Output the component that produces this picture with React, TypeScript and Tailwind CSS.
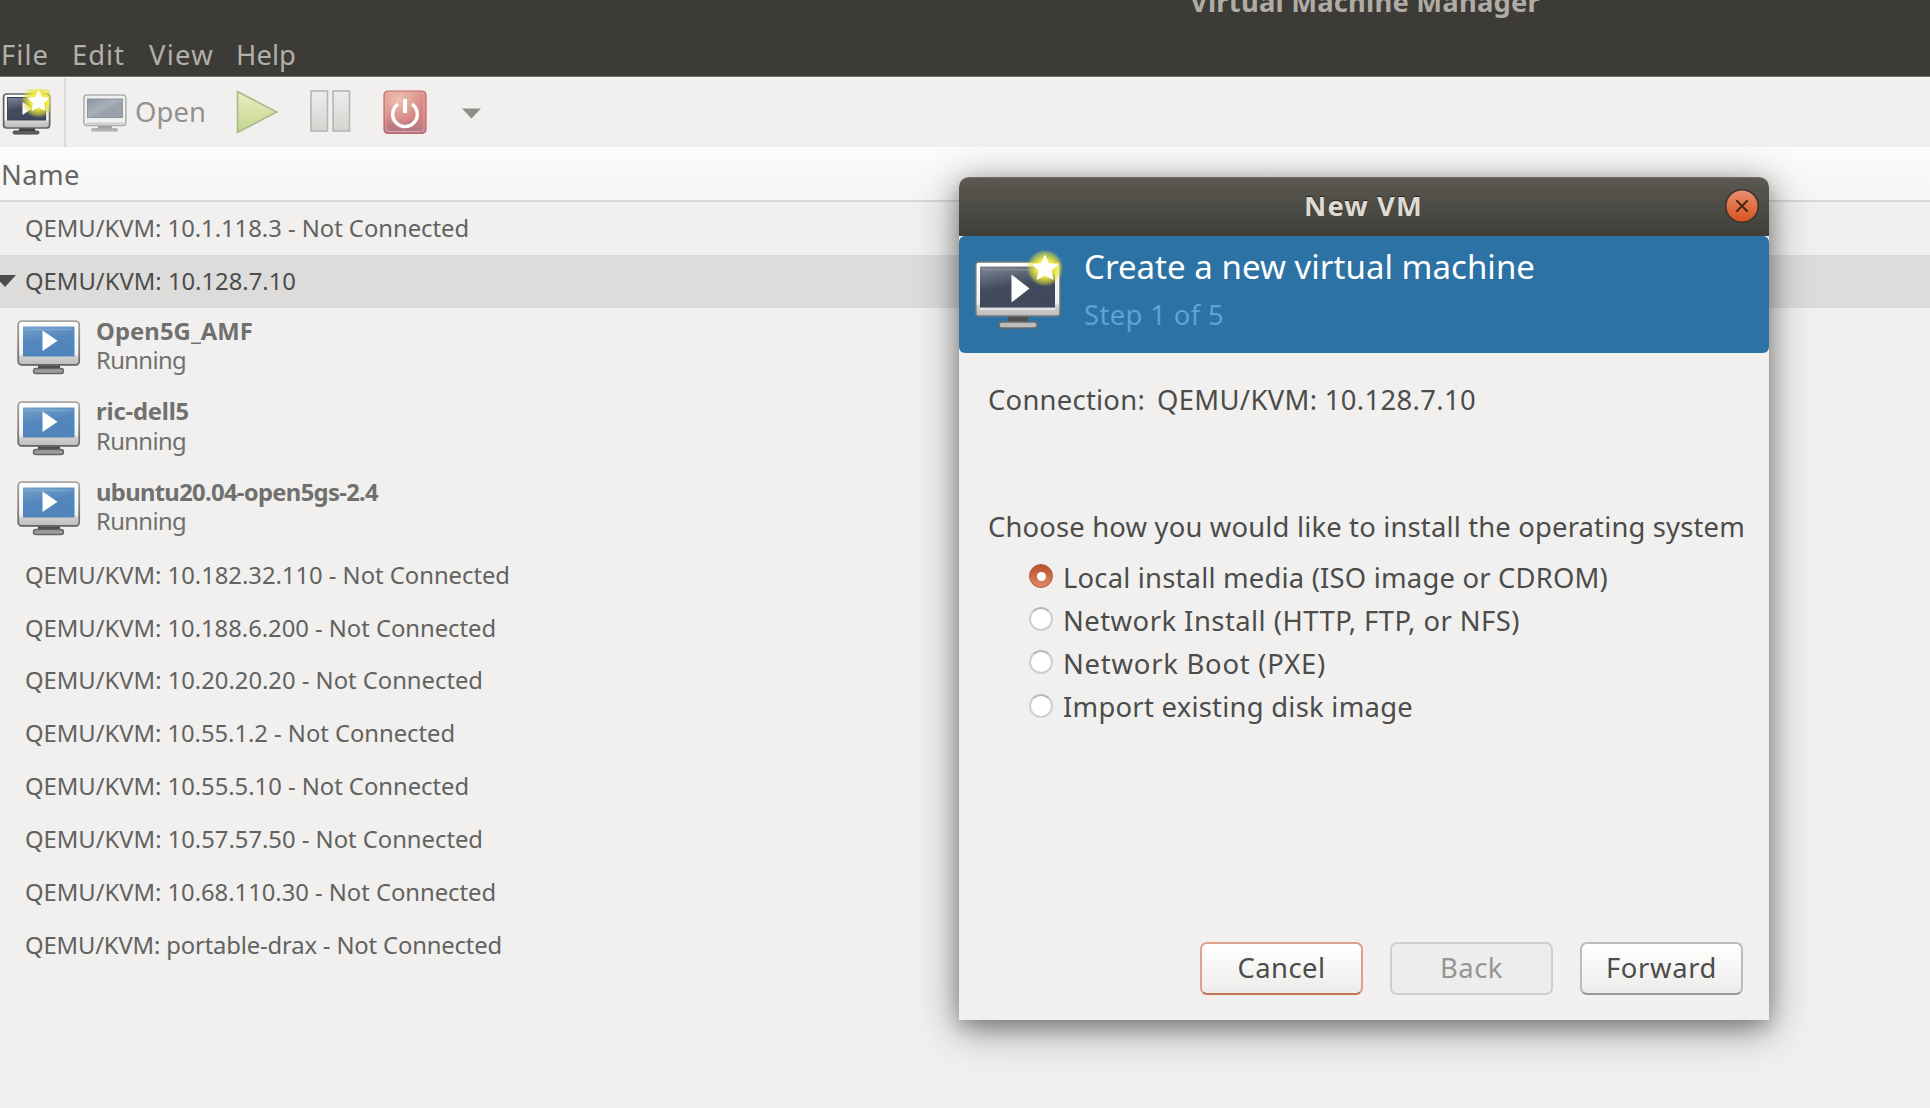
import { useLayoutEffect, useRef, useState } from "react";

/* Text set to a given advance width by adjusting its tracking. */
function Fit({ text, width, className = "" }: { text: string; width: number; className?: string }) {
  const ref = useRef<HTMLSpanElement>(null);
  const [tracking, setTracking] = useState(0);
  useLayoutEffect(() => {
    const el = ref.current;
    if (el) setTracking((width - el.getBoundingClientRect().width) / text.length);
  }, [text, width]);
  return (
    <span ref={ref} className={"inline-block shrink-0 whitespace-pre " + className} style={{ letterSpacing: tracking }}>
      {text}
    </span>
  );
}

function Gradients() {
  return (
    <svg width="0" height="0" className="absolute">
      <defs>
        <linearGradient id="frame" x1="0" y1="0" x2="0" y2="1">
          <stop offset="0" stopColor="#ffffff" />
          <stop offset="0.75" stopColor="#f2f2f2" />
          <stop offset="0.82" stopColor="#cfcfcf" />
          <stop offset="1" stopColor="#bdbdbd" />
        </linearGradient>
        <linearGradient id="edge" x1="0" y1="0" x2="0" y2="1">
          <stop offset="0" stopColor="#a4a4a2" />
          <stop offset="1" stopColor="#6a6a68" />
        </linearGradient>
        <linearGradient id="blue" x1="0" y1="0" x2="0.3" y2="1">
          <stop offset="0" stopColor="#79a3cd" />
          <stop offset="0.5" stopColor="#5488bd" />
          <stop offset="1" stopColor="#4f84ba" />
        </linearGradient>
        <linearGradient id="navy" x1="0" y1="0" x2="0.3" y2="1">
          <stop offset="0" stopColor="#7f8796" />
          <stop offset="0.55" stopColor="#434c5f" />
          <stop offset="1" stopColor="#40495c" />
        </linearGradient>
        <linearGradient id="grey" x1="0" y1="0" x2="1" y2="1">
          <stop offset="0" stopColor="#8d95a1" />
          <stop offset="0.45" stopColor="#a9afb8" />
          <stop offset="0.6" stopColor="#9aa1aa" />
          <stop offset="1" stopColor="#9ba1a9" />
        </linearGradient>
        <radialGradient id="glow">
          <stop offset="0" stopColor="#fdf84c" />
          <stop offset="0.5" stopColor="#f0ea3c" stopOpacity="0.95" />
          <stop offset="0.8" stopColor="#e2e13c" stopOpacity="0.55" />
          <stop offset="1" stopColor="#dfe03a" stopOpacity="0" />
        </radialGradient>
        <linearGradient id="play" x1="0" y1="0" x2="0" y2="1">
          <stop offset="0" stopColor="#eaf0bd" />
          <stop offset="1" stopColor="#c5d391" />
        </linearGradient>
        <linearGradient id="pause" x1="0" y1="0" x2="0" y2="1">
          <stop offset="0" stopColor="#eeeeed" />
          <stop offset="1" stopColor="#d2d5d0" />
        </linearGradient>
        <linearGradient id="power" x1="0" y1="0" x2="0" y2="1">
          <stop offset="0" stopColor="#dc918a" />
          <stop offset="0.65" stopColor="#d17f7e" />
          <stop offset="1" stopColor="#ae7789" />
        </linearGradient>
        <radialGradient id="powerShine" cx="0.35" cy="0.2" r="0.6">
          <stop offset="0" stopColor="#ecc0ae" />
          <stop offset="1" stopColor="#ecc0ae" stopOpacity="0" />
        </radialGradient>
      </defs>
    </svg>
  );
}

const STAR = "M0 -12.5 L3.8 -4.4 L12.4 -3.4 L6 2.6 L7.8 11.2 L0 7 L-7.8 11.2 L-6 2.6 L-12.4 -3.4 L-3.8 -4.4 Z";

function VmIcon() {
  return (
    <svg width="64" height="56" viewBox="0 0 64 56">
      <rect x="21" y="45" width="22" height="5" fill="#4c4c4b" />
      <rect x="16.5" y="48.5" width="30" height="5" rx="2.5" fill="#9d9d9c" stroke="#666665" strokeWidth="1.4" />
      <rect x="1.2" y="1.2" width="61" height="43.6" rx="3.5" fill="url(#frame)" stroke="url(#edge)" strokeWidth="1.8" />
      <path d="M3 44.6H60.5" stroke="#666" strokeWidth="1.4" />
      <rect x="6" y="6.5" width="51.5" height="30" fill="url(#blue)" />
      <path d="M9 9.6H54" stroke="#8fb3d8" strokeWidth="1" opacity="0.7" />
      <path d="M25.5 10.5V31L40.5 20.8Z" fill="#fff" />
    </svg>
  );
}

function NewVmLargeIcon() {
  return (
    <svg width="90" height="84" viewBox="0 0 90 84">
      <rect x="33" y="68" width="20" height="8" fill="#50504f" />
      <rect x="24" y="74" width="38" height="6" rx="2.4" fill="#bdbdbc" stroke="#696b6c" strokeWidth="1.6" />
      <rect x="0.9" y="14" width="84" height="54" rx="2.5" fill="url(#frame)" stroke="#77797b" strokeWidth="1.3" />
      <rect x="5" y="18.5" width="75" height="41" fill="url(#navy)" />
      <path d="M8 21.8H76" stroke="#a7adb8" strokeWidth="1" opacity="0.55" />
      <path d="M5 61H80" stroke="#fff" strokeWidth="1" />
      <path d="M36.5 26.5V54.5L54.5 40.5Z" fill="#fff" />
      <circle cx="70" cy="20" r="18.5" fill="url(#glow)" />
      <path d={STAR} transform="translate(70 20)" fill="#fff" stroke="#fff" strokeLinejoin="round" />
    </svg>
  );
}

function NewVmSmallIcon() {
  return (
    <svg width="50" height="48" viewBox="0 0 50 48">
      <rect x="17" y="39" width="16" height="5" fill="#3f3f3e" />
      <rect x="11" y="42" width="26" height="3" rx="1.4" fill="#626261" stroke="#454544" strokeWidth="1" />
      <rect x="1.6" y="5" width="46" height="34" rx="3" fill="url(#frame)" stroke="#62625f" strokeWidth="1.7" />
      <rect x="5.6" y="8.5" width="38" height="22.5" fill="url(#navy)" stroke="#333d50" strokeWidth="1" />
      <path d="M20.5 13V26L30 19.5Z" fill="#fff" />
      <svg x="20" y="0" width="28" height="30" viewBox="20 0 28 30">
        <circle cx="36.5" cy="12" r="17" fill="url(#glow)" />
      </svg>
      <path d={STAR} transform="translate(36.5 12) scale(0.84)" fill="#fff" stroke="#fff" />
    </svg>
  );
}

function OpenIcon() {
  return (
    <svg width="44" height="40" viewBox="0 0 44 40">
      <rect x="15" y="31" width="14" height="5" fill="#a0a09f" />
      <rect x="8.5" y="34.5" width="26" height="2.6" rx="1.2" fill="#b5b5b4" stroke="#a6a6a5" strokeWidth="0.8" />
      <rect x="0.9" y="1" width="42" height="30.5" rx="3" fill="#f0f0ef" stroke="#aeaeac" strokeWidth="1.5" />
      <path d="M3 29.5H41" stroke="#cececd" strokeWidth="2" />
      <rect x="4.5" y="5" width="35" height="18.5" fill="url(#grey)" stroke="#8e96a0" strokeWidth="1" />
    </svg>
  );
}

function Radio({ checked }: { checked: boolean }) {
  return checked ? (
    <span className="flex size-[24px] items-center justify-center rounded-full border border-[#b4583a] bg-linear-to-b from-[#b8502a] to-[#df8a68]">
      <span className="size-[9px] rounded-full bg-white" />
    </span>
  ) : (
    <span className="size-[24px] rounded-full border-2 border-[#cfcfcd] border-t-[#b8b8b6] bg-white" />
  );
}

const MENU = [
  { text: "File", width: 48, gap: "ml-[1px]" },
  { text: "Edit", width: 53, gap: "ml-[23px]" },
  { text: "View", width: 65, gap: "ml-[24px]" },
  { text: "Help", width: 60, gap: "ml-[22px]" },
];

const MACHINES = [
  { name: "Open5G_AMF", width: 157 },
  { name: "ric-dell5", width: 93 },
  { name: "ubuntu20.04-open5gs-2.4", width: 282 },
];

const HOSTS = [
  { text: "QEMU/KVM: 10.182.32.110 - Not Connected", width: 485 },
  { text: "QEMU/KVM: 10.188.6.200 - Not Connected", width: 471 },
  { text: "QEMU/KVM: 10.20.20.20 - Not Connected", width: 458 },
  { text: "QEMU/KVM: 10.55.1.2 - Not Connected", width: 430 },
  { text: "QEMU/KVM: 10.55.5.10 - Not Connected", width: 444 },
  { text: "QEMU/KVM: 10.57.57.50 - Not Connected", width: 458 },
  { text: "QEMU/KVM: 10.68.110.30 - Not Connected", width: 471 },
  { text: "QEMU/KVM: portable-drax - Not Connected", width: 477 },
];

const OPTIONS = [
  { text: "Local install media (ISO image or CDROM)", width: 545, checked: true },
  { text: "Network Install (HTTP, FTP, or NFS)", width: 457, checked: false },
  { text: "Network Boot (PXE)", width: 263, checked: false },
  { text: "Import existing disk image", width: 350, checked: false },
];

function HostRow({ text, width }: { text: string; width: number }) {
  return (
    <div className="flex h-[52.9px] shrink-0 items-center pl-[25px] text-[23.8px] text-[#626261]">
      <Fit text={text} width={width} />
    </div>
  );
}

function Toolbar() {
  return (
    <div className="flex h-[70px] shrink-0 items-start border-t border-[#fafaf9]">
      <div className="ml-[2px] mt-[11px] w-[62px]"><NewVmSmallIcon /></div>
      <div className="h-[69px] w-[2px] bg-[#dcdbda]" />
      <div className="ml-[17px] mt-[16px]"><OpenIcon /></div>
      <div className="ml-[8px] mt-[14px] h-[40px] text-[27.4px] leading-[40px] text-[#929190]">
        <Fit text="Open" width={71} />
      </div>
      <svg width="44" height="46" viewBox="0 0 44 46" className="ml-[30px] mt-[11px]">
        <path d="M1.5 2.5V43.5L40.5 23Z" fill="url(#play)" stroke="#a5bd85" strokeWidth="1.6" />
      </svg>
      <svg width="42" height="44" viewBox="0 0 42 44" className="ml-[30px] mt-[11px]">
        <rect x="1" y="2" width="16.5" height="40" fill="url(#pause)" stroke="#b5b7b4" strokeWidth="1.6" />
        <rect x="23" y="2" width="16.5" height="40" fill="url(#pause)" stroke="#b5b7b4" strokeWidth="1.6" />
      </svg>
      <svg width="44" height="46" viewBox="0 0 44 46" className="ml-[31px] mt-[11px]">
        <rect x="1" y="2" width="42" height="42.5" rx="4" fill="url(#power)" />
        <rect x="1" y="2" width="42" height="42.5" rx="4" fill="url(#powerShine)" stroke="#c3696a" strokeWidth="1.2" />
        <rect x="3" y="4" width="38" height="38.5" rx="2.5" fill="none" stroke="#e9b5ae" strokeWidth="1" opacity="0.7" />
        <path d="M15 15.2A12.3 12.3 0 1 0 29 15.2" fill="none" stroke="#fff" strokeWidth="3.4" />
        <path d="M22 10V24" stroke="#fff" strokeWidth="4" />
      </svg>
      <svg width="20" height="12" viewBox="0 0 20 12" className="ml-[35px] mt-[30px]">
        <path d="M0 0.5H19L9.5 10.5Z" fill="#8e8e8b" />
      </svg>
    </div>
  );
}

function Dialog() {
  return (
    <div className="absolute left-[959px] top-[176.5px] flex h-[843px] w-[810px] flex-col rounded-t-[10px] bg-[#f1f0ee] shadow-[0_8px_44px_rgba(0,0,0,0.42),0_7px_20px_rgba(0,0,0,0.26)]">
      <div className="relative flex h-[59.5px] shrink-0 items-center justify-center rounded-t-[10px] border-t border-[#6e6d66] bg-linear-to-b from-[#5b5951] to-[#3f3e39] text-[27.4px] font-bold text-[#dfdbd2] [text-shadow:0_-1px_1px_rgba(0,0,0,0.6)]">
        <Fit text="New VM" width={119} className="-mt-[2px] -ml-[1px]" />
        <svg width="36" height="36" viewBox="0 0 36 36" className="absolute right-[9.5px] top-[10.5px]">
          <defs>
            <linearGradient id="close" x1="0" y1="0" x2="0" y2="1">
              <stop offset="0" stopColor="#ea9070" />
              <stop offset="1" stopColor="#d6521f" />
            </linearGradient>
          </defs>
          <circle cx="18" cy="18" r="16.3" fill="url(#close)" stroke="#36352f" strokeWidth="1.6" />
          <path d="M13 13L23 23M23 13L13 23" stroke="#4b2a15" strokeWidth="2.2" strokeLinecap="round" />
        </svg>
      </div>
      <div className="flex h-[117px] shrink-0 rounded-[6px] bg-[#2d72a4]">
        <div className="ml-[16px] mt-[12px] w-[109px]"><NewVmLargeIcon /></div>
        <div className="flex flex-col">
          <Fit text="Create a new virtual machine" width={451} className="mt-[6px] h-[50px] text-[33px] leading-[50px] text-white" />
          <Fit text="Step 1 of 5" width={140} className="mt-[3px] h-[40px] self-start text-[27.4px] leading-[40px] text-[#5fa2d6]" />
        </div>
      </div>
      <div className="flex flex-1 flex-col pl-[29px] pr-[26px] text-[27.4px] leading-[40px] text-[#4c4c4b]">
        <div className="mt-[27px] flex gap-[12px]">
          <Fit text="Connection:" width={157} />
          <Fit text="QEMU/KVM: 10.128.7.10" width={319} />
        </div>
        <Fit text="Choose how you would like to install the operating system" width={757} className="mt-[87px] self-start" />
        <div className="mt-[9px] flex flex-col pl-[41px]">
          {OPTIONS.map((o) => (
            <div key={o.text} className="flex h-[43.2px] items-center">
              <span className="-mt-[3px] flex w-[34px] items-center"><Radio checked={o.checked} /></span>
              <Fit text={o.text} width={o.width} />
            </div>
          ))}
        </div>
        <div className="mb-[25px] mt-auto flex justify-end gap-[27px]">
          <div className="flex h-[53px] w-[163px] items-center justify-center rounded-[7px] border-2 border-[#dca18a] border-b-[#c77655] bg-linear-to-b from-white to-[#edecea]">
            <Fit text="Cancel" width={88} />
          </div>
          <div className="flex h-[53px] w-[163px] items-center justify-center rounded-[7px] border-2 border-[#cfcfcd] bg-[#ededec] text-[#969593]">
            <Fit text="Back" width={63} />
          </div>
          <div className="flex h-[53px] w-[163px] items-center justify-center rounded-[7px] border-2 border-[#bcbcba] border-b-[#989896] bg-linear-to-b from-white to-[#edecea]">
            <Fit text="Forward" width={111} />
          </div>
        </div>
      </div>
    </div>
  );
}

export default function App() {
  return (
    <div className="relative flex h-[1108px] w-[1930px] flex-col overflow-hidden bg-[#f1f0ee] font-['Noto_Sans','Open_Sans',sans-serif]">
      <Gradients />
      <div className="flex h-[77px] shrink-0 flex-col border-b border-[#716f69] bg-[#3c3b37]">
        <div className="-mt-[18px] h-[40px] pl-[1190px] text-[27.4px] font-bold leading-[40px] text-[#b0aca3]">
          <Fit text="Virtual Machine Manager" width={350} />
        </div>
        <div className="mt-[13px] flex h-[40px] text-[27.4px] leading-[40px] text-[#b2b0a8]">
          {MENU.map((m) => (
            <Fit key={m.text} text={m.text} width={m.width} className={m.gap} />
          ))}
        </div>
      </div>
      <Toolbar />
      <div className="flex h-[55px] shrink-0 items-center border-b-2 border-[#d9d6d5] bg-linear-to-b from-[#fcfcfb] to-[#f5f5f4] pl-[1px] pt-[2px] text-[27.4px] text-[#666664]">
        <Fit text="Name" width={79} />
      </div>
      <HostRow text="QEMU/KVM: 10.1.118.3 - Not Connected" width={444} />
      <div className="flex h-[53px] shrink-0 items-center bg-[#dddcda] text-[23.8px] text-[#4c4c4b]">
        <svg width="24" height="12" viewBox="0 0 24 12" className="-ml-[7px] mr-[8px]">
          <path d="M1 0H23L12 12Z" fill="#4c4c4b" />
        </svg>
        <Fit text="QEMU/KVM: 10.128.7.10" width={271} />
      </div>
      {MACHINES.map((m) => (
        <div key={m.name} className="flex h-[80.4px] shrink-0 items-start pl-[16.5px]">
          <div className="mt-[12.5px] w-[79.5px]"><VmIcon /></div>
          <div className="mt-[9px] flex flex-col items-start text-[23.8px] leading-[29.4px] text-[#70706e]">
            <Fit text={m.name} width={m.width} className="font-bold" />
            <Fit text="Running" width={90} />
          </div>
        </div>
      ))}
      {HOSTS.map((h) => (
        <HostRow key={h.text} text={h.text} width={h.width} />
      ))}
      <Dialog />
    </div>
  );
}
